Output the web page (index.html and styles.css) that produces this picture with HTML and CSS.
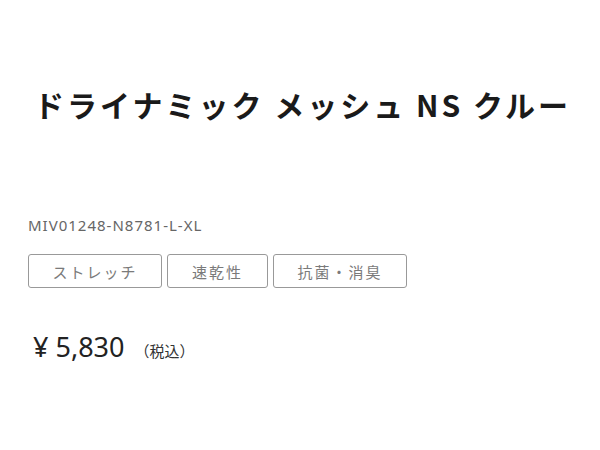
FILE: index.html
```html
<!DOCTYPE html>
<html lang="ja">
<head>
<meta charset="utf-8">
<link rel="stylesheet" href="styles.css">
</head>
<body>
<main class="product">
  <h1 class="title">ドライナミック メッシュ NS クルー</h1>
  <p class="sku">MIV01248-N8781-L-XL</p>
  <ul class="tags">
    <li class="tag tag-1">ストレッチ</li>
    <li class="tag tag-2">速乾性</li>
    <li class="tag tag-3">抗菌・消臭</li>
  </ul>
  <p class="price"><span class="amount">¥ 5,830</span><span class="tax">（税込）</span></p>
</main>
</body>
</html>
```
FILE: styles.css
```css
html, body { margin: 0; padding: 0; background: #fff; }
body {
  width: 600px; height: 450px; overflow: hidden;
  font-family: "Noto Sans CJK JP", "Noto Sans", sans-serif;
  color: #222;
}
.product { padding: 0 0 0 28px; }
.title {
  margin: 0; padding-top: 84px; padding-left: 6px;
  font-size: 30px; font-weight: 700; letter-spacing: 3px;
  line-height: 40px; color: #1a1a1a;
}
.sku {
  margin: 91px 0 0; font-size: 15px; line-height: 20px; color: #666;
  letter-spacing: 1px;
  font-family: "Noto Sans", sans-serif;
}
.tags { list-style: none; margin: 19px 0 0; padding: 0; display: flex; gap: 5px; }
.tag {
  box-sizing: border-box; height: 34px; border: 1px solid #999; border-radius: 3px;
  display: flex; align-items: center; justify-content: center;
  font-size: 15px; color: #7a7a7a; letter-spacing: 2px;
}
.tag-1 { width: 134px; }
.tag-2 { width: 101px; }
.tag-3 { width: 134px; }
.price { margin: 41px 0 0; display: flex; align-items: baseline; padding-left: 5px; line-height: 36px; }
.amount { font-size: 27px; color: #222; font-family: "Noto Sans", sans-serif; }
.tax { font-size: 15px; color: #333; margin-left: 10px; }
```
